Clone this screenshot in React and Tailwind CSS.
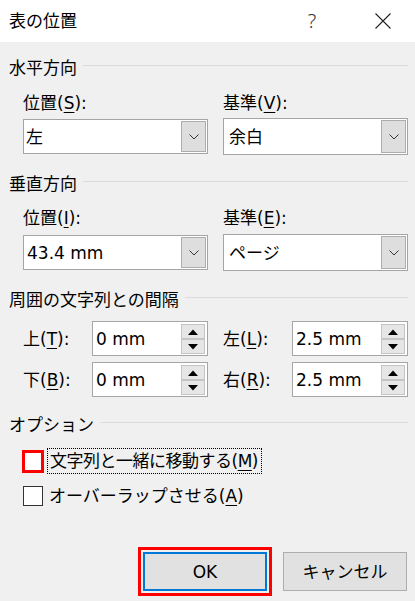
import React from 'react';

const Key = ({ children }) => <span className="underline underline-offset-[3px] decoration-1">{children}</span>;

const SectionHeader = ({ title, className = '' }) => (
  <div className={`flex items-center h-[20px] pl-[9px] pr-[7px] ${className}`}>
    <span className="leading-[20px] whitespace-nowrap">{title}</span>
    <div className="flex-1 h-px bg-[#dcdcdc] ml-[6px] mb-[6px]" />
  </div>
);

const Chevron = () => (
  <svg width="10" height="6" viewBox="0 0 10 6">
    <path d="M0.5 0.5 L5 5 L9.5 0.5" fill="none" stroke="#333" strokeWidth="1" />
  </svg>
);

const Select = ({ value, pad = 'pl-[1px]', tall = false }) => (
  <div className={`${tall ? 'h-[37px]' : 'h-[35px]'} border border-[#a5a5a5] bg-white flex p-[1px]`}>
    <div className={`flex-1 flex items-center leading-[20px] ${pad}`}>{value}</div>
    <div className="w-[25px] border border-[#adadad] bg-[#dedede] flex items-center justify-center">
      <Chevron />
    </div>
  </div>
);

const Triangle = ({ up }) => (
  <svg width="10" height="6" viewBox="0 0 10 6">
    <path d={up ? 'M0 6 L5 0.5 L10 6 Z' : 'M0 0 L10 0 L5 5.5 Z'} fill="#000" />
  </svg>
);

const Spin = ({ label, value }) => (
  <div className="flex items-center">
    <div className="w-[69px] leading-[20px]">{label}</div>
    <div className="w-[116px] h-[35px] border border-[#a5a5a5] bg-white flex pt-[2px] pb-[1px] pr-[2px]">
      <div className="flex-1 flex items-center pl-[3px] leading-[20px]">{value}</div>
      <div className="w-[24px] flex flex-col">
        <div className="h-[15px] border border-[#c4c4c4] bg-[#e6e6e6] flex items-center justify-center">
          <Triangle up />
        </div>
        <div className="h-[15px] border border-[#c4c4c4] bg-[#e6e6e6] flex items-center justify-center">
          <Triangle />
        </div>
      </div>
    </div>
  </div>
);

export default function App() {
  return (
    <div className="w-[415px] h-[601px] bg-[#f0f0f0] text-[17px] text-black overflow-hidden font-['DejaVu_Sans','Noto_Sans_CJK_JP',sans-serif]">
      {/* title bar */}
      <div className="h-[42px] bg-white flex items-center pl-[9px]">
        <span className="leading-[20px]">表の位置</span>
        <span className="ml-auto w-[10px] text-center text-[20px] font-light text-[#333] leading-[20px] mr-[58px] font-['Noto_Sans',sans-serif]">?</span>
        <svg width="16" height="16" viewBox="0 0 16 16" className="mr-[24px]">
          <path d="M0.5 0.5 L15.5 15.5 M15.5 0.5 L0.5 15.5" stroke="#222" strokeWidth="1.1" fill="none" />
        </svg>
      </div>

      <SectionHeader title="水平方向" className="mt-[16px]" />
      <div className="grid grid-cols-2 gap-x-[15px] pl-[23px] pr-[7px]">
        <div className="mt-[15px] leading-[20px]">位置(<Key>S</Key>):</div>
        <div className="mt-[15px] leading-[20px]">基準(<Key>V</Key>):</div>
        <div className="mt-[5px] h-[37px] flex flex-col justify-center">
          <Select value="左" />
        </div>
        <div className="mt-[5px]">
          <Select value="余白" pad="pl-[4px]" tall />
        </div>
      </div>

      <SectionHeader title="垂直方向" className="mt-[19px]" />
      <div className="grid grid-cols-2 gap-x-[15px] pl-[23px] pr-[7px]">
        <div className="mt-[14px] leading-[20px]">位置(<Key>I</Key>):</div>
        <div className="mt-[14px] leading-[20px]">基準(<Key>E</Key>):</div>
        <div className="mt-[6px] h-[37px] flex flex-col justify-center">
          <Select value="43.4 mm" pad="pl-[2px]" />
        </div>
        <div className="mt-[6px]">
          <Select value="ページ" pad="pl-[4px]" tall />
        </div>
      </div>

      <SectionHeader title="周囲の文字列との間隔" className="mt-[19px]" />
      <div className="grid grid-cols-2 gap-x-[15px] gap-y-[6px] pl-[23px] pr-[7px] mt-[11px]">
        <Spin label={<>上(<Key>T</Key>):</>} value="0 mm" />
        <Spin label={<>左(<Key>L</Key>):</>} value="2.5 mm" />
        <Spin label={<>下(<Key>B</Key>):</>} value="0 mm" />
        <Spin label={<>右(<Key>R</Key>):</>} value="2.5 mm" />
      </div>

      <SectionHeader title="オプション" className="mt-[18px]" />
      <div className="pl-[22px] mt-[13px] h-[26px] flex items-center">
        <div className="w-[22px] h-[23px] border-[3px] border-[#ff0000] bg-white" />
        <div className="ml-[3px] h-[26px] border border-dotted border-black pl-[2px] pr-[3px] flex items-center leading-[20px] tracking-[-0.5px]">
          文字列と一緒に移動する(<Key>M</Key>)
        </div>
      </div>
      <div className="pl-[23px] mt-[9px] h-[26px] flex items-center">
        <div className="w-[20px] h-[20px] border border-[#333] bg-white" />
        <div className="ml-[6px] leading-[20px]">
          オーバーラップさせる(<Key>A</Key>)
        </div>
      </div>

      <div className="mt-[43px] flex justify-end gap-[16px] pr-[8px]">
        <button className="w-[124px] h-[39px] bg-[#e1e1e1] border-2 border-[#0078d7] outline-[3px] outline-solid outline-[#ff0000] outline-offset-2 leading-[20px]">
          OK
        </button>
        <button className="w-[124px] h-[39px] bg-[#e1e1e1] border border-[#adadad] leading-[20px]">
          キャンセル
        </button>
      </div>
    </div>
  );
}
